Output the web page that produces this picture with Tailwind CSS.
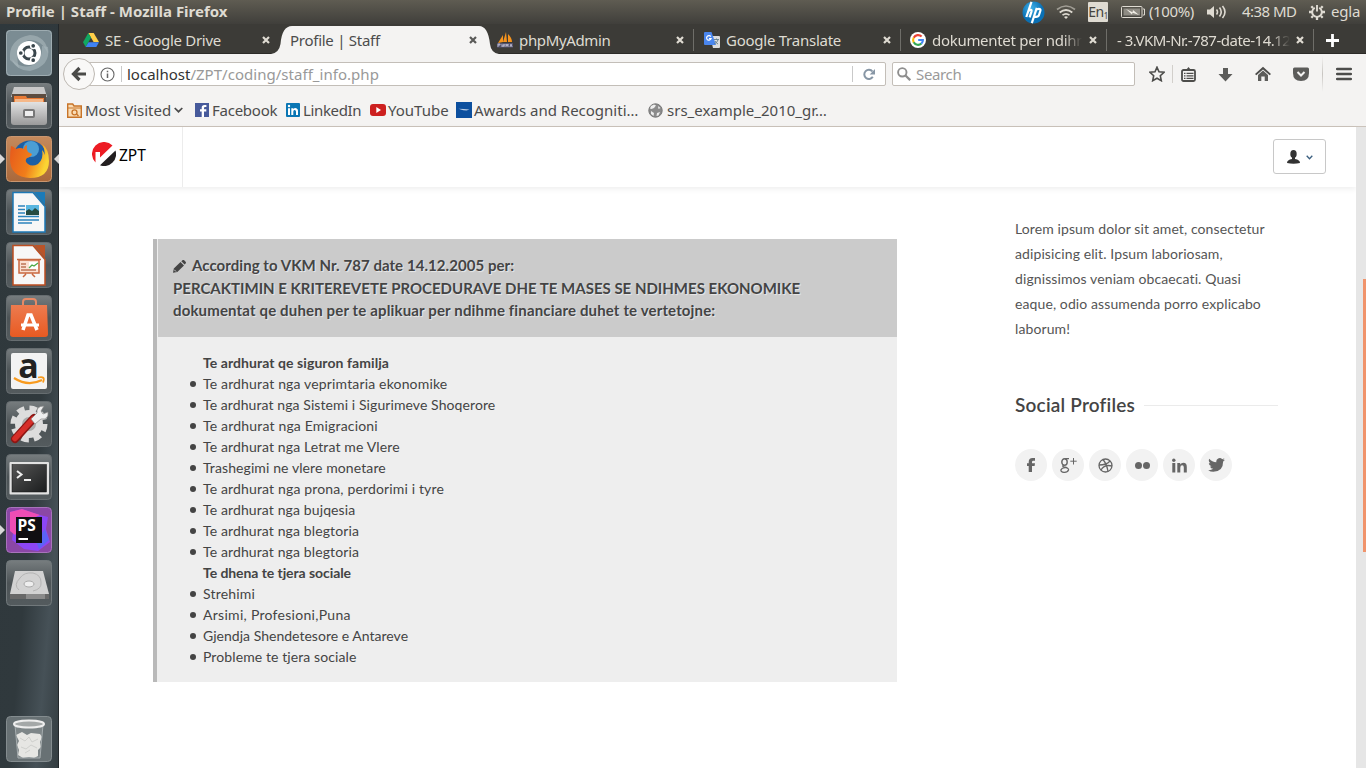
<!DOCTYPE html>
<html lang="sq">
<head>
<meta charset="utf-8">
<title>Profile | Staff</title>
<script src="https://cdn.jsdelivr.net/npm/@tailwindcss/browser@4"></script>
</head>
<body class="w-[1366px] h-[768px] overflow-hidden flex flex-col bg-white font-['Noto_Sans',sans-serif] text-[15px] leading-5 whitespace-nowrap">

<!-- System menu bar -->
<header class="h-6 shrink-0 flex items-center bg-linear-to-b from-[#5f5c52] to-[#403f3b] text-[#dfdbd2]">
  <div class="w-[1016px] pl-1.5 -mt-0.5 font-bold">Profile | Staff - Mozilla Firefox</div>
  <svg class="ml-1.5 size-[23px] shrink-0" viewBox="0 0 23 23"><defs><radialGradient id="hp" cx=".4" cy=".3"><stop offset="0" stop-color="#3fb0e8"/><stop offset="1" stop-color="#0a70b4"/></radialGradient></defs><circle cx="11.500" cy="11.500" r="11" fill="url(#hp)"/><path d="M9.500.800 4.300 16M5.800 10.500q4.300-3.500 3.700 0L7.600 16.300M14.800 6.800 9.800 22.200M14 8.500q5.300-1.600 4.300 1.500l-1.300 4q-.8 2.400-4.800 1.700" fill="none" stroke="#fff" stroke-width="2.200"/></svg>
  <svg class="ml-[11px] w-5 h-[14px] shrink-0" viewBox="0 0 20 14" fill="none" stroke="#dfdbd2" stroke-width="1.700"><path d="M1 4.500Q10-2.500 19 4.500" opacity=".55"/><path d="M3.700 7.500q6.300-5 12.600 0M6.500 10.200q3.500-2.700 7 0"/><path d="m8 12 2 2 2-2q-2-1.500-4 0" fill="#dfdbd2" stroke="none"/></svg>
  <div class="ml-3 w-5 h-5 shrink-0 bg-[#dfdbd2] text-[#45433e] text-[14px] tracking-[-0.5px] flex items-center justify-center rounded-[1px]">En<span class="text-[8px] pt-2">1</span></div>
  <svg class="ml-[13px] w-6 h-3 shrink-0" viewBox="0 0 24 12"><rect x=".5" y=".5" width="20.500" height="11" rx="1" fill="none" stroke="#dfdbd2"/><path d="M22 3h1.500v6H22" fill="none" stroke="#dfdbd2"/><path d="M2.500 2.500h16.500v7H2.500z" fill="#8f8c84"/><path d="m5 3 6.500 3.300L12 4l6 5-6.500-2.300L11 8.600z" fill="#f0ede5"/></svg>
  <span class="ml-1 w-[45px] -mt-0.5 tracking-[-0.4px]">(100%)</span>
  <svg class="ml-3 w-[21px] h-4 shrink-0" viewBox="0 0 21 16" fill="none" stroke="#dfdbd2" stroke-width="1.600"><path d="M1 5.500h3L8 2v12L4 10.500H1z" fill="#dfdbd2" stroke="none"/><path d="M10.500 5.500q2 2.500 0 5M13.500 3.500q3.500 4.500 0 9M16.500 2q5 6 0 12"/></svg>
  <span class="ml-[15px] w-[54px] -mt-0.5 tracking-[-0.55px]">4:38 MD</span>
  <svg class="ml-[13px] size-4 shrink-0" viewBox="0 0 16 16" fill="none" stroke="#dfdbd2"><path d="M5.800 3.800a4.800 4.800 0 1 0 4.400 0" stroke-width="1.900"/><path d="M8 1v6.500" stroke-width="1.900"/><path d="M0 8h3m10 0h3M8 13v3M2.300 2.300 4 4m9.700-1.700L12 4M2.300 13.700 4 12m9.700 1.700L12 12" stroke-width="2.300"/></svg>
  <span class="ml-1.5 -mt-0.5 tracking-[-0.2px]">egla</span>
</header>

<div class="flex flex-1 min-h-0">

<!-- Launcher -->
<nav class="w-[59px] shrink-0 pl-1.5 pt-1.5 pb-1.5 flex flex-col gap-[7px] bg-linear-[95deg,#2f383c_0%,#30393d_60%,#465157_82%,#343d41_100%] border-r border-[#22272a]">
  <svg class="size-[46px]" viewBox="0 0 46 46"><rect width="46" height="46" rx="4" fill="#7b8c93"/><path d="M4 30Q2 9 24 5q17 1 18 19Q36 9 22 10 7 16 13 38" fill="#aebbc0" opacity=".55"/><path d="M42 17q3 19-18 24Q9 40 6 29q9 11 21 6 10-5 9-19" fill="#a9b7bd" opacity=".6"/><rect x=".5" y=".5" width="45" height="45" rx="4" fill="none" stroke="#9eacb1"/><circle cx="23" cy="23" r="12" fill="#fff"/><circle cx="23" cy="23" r="6" fill="none" stroke="#3a464c" stroke-width="3"/><g stroke="#fff" stroke-width="1.500"><circle cx="14.800" cy="23" r="2.600" fill="#3a464c"/><circle cx="27.200" cy="15.800" r="2.600" fill="#3a464c"/><circle cx="27.200" cy="30.200" r="2.600" fill="#3a464c"/></g></svg>
  <svg class="size-[46px]" viewBox="0 0 46 46"><defs><linearGradient id="tile" x2="0" y2="1"><stop offset="0" stop-color="#777d7f"/><stop offset=".5" stop-color="#4c5356"/><stop offset="1" stop-color="#545b5e"/></linearGradient><linearGradient id="gr" x2="0" y2="1"><stop offset="0" stop-color="#e2e2e2"/><stop offset="1" stop-color="#9a9a9a"/></linearGradient></defs><rect x=".5" y=".5" width="45" height="45" rx="4" fill="url(#tile)" stroke="#777d7f"/><path d="M8 4h30l3 10H5z" fill="#c9c9c9"/><path d="M6 11h34v11H6z" fill="#5d4c40"/><path d="M8 13h12l1 2h17v6H8z" fill="#e87a35"/><path d="M9 16h28v3H9z" fill="#f5b889"/><path d="M5 19h36v20q0 3-3 3H8q-3 0-3-3z" fill="url(#gr)"/><rect x="18" y="27" width="10" height="7" rx="1" fill="#eee" stroke="#777" stroke-width="2"/></svg>
  <div class="relative size-[46px]">
    <svg class="size-[46px]" viewBox="0 0 46 46"><defs><linearGradient id="ff" x2="0" y2="1"><stop offset="0" stop-color="#c58a5c"/><stop offset="1" stop-color="#a9683b"/></linearGradient><linearGradient id="fox" x2="1" y2=".3"><stop offset="0" stop-color="#e5581c"/><stop offset=".6" stop-color="#f17e1a"/><stop offset="1" stop-color="#fbd433"/></linearGradient></defs><rect x=".5" y=".5" width="45" height="45" rx="4" fill="url(#ff)" stroke="#c9966f"/><circle cx="24" cy="21" r="16.500" fill="#1c5fa5"/><circle cx="25" cy="13" r="8" fill="#5fb9e8" opacity=".7"/><path d="M5 10q2 0 5 3 4-2 8 0 0-3 3-4-1 4 1 7l4 2q-1 3-5 4-3 3 1 6 4 3 10 0 6-5 4-14 2 2 3 5 0-6-3-11 7 5 7 17 0 17-19 17Q4 41 4 23 4 16 5 10z" fill="url(#fox)"/></svg>
    <span class="absolute -left-1.5 top-[18px] border-y-[5px] border-y-transparent border-l-[5px] border-l-[#d8d8d8]"></span>
    <span class="absolute left-12 top-[18px] border-y-[5px] border-y-transparent border-r-[5px] border-r-[#d8d8d8]"></span>
  </div>
  <svg class="size-[46px]" viewBox="0 0 46 46"><rect x=".5" y=".5" width="45" height="45" rx="4" fill="url(#tile)" stroke="#666d70"/><path d="M7 3.500h20l12 14V43H7z" fill="#f7f7f7" stroke="#1d78b5" stroke-width="1.500"/><path d="M28 3h11v13z" fill="#1b7bb8"/><path d="M12 17h7m-7 3.500h7M12 24h7m-7 3.500h21M12 31h21m-21 3h14" stroke="#2c84bd" stroke-width="1.700"/><path d="M20 16h13v10H20z" fill="#58b6e0"/><path d="m20 26 0-4 3-2 3 2 3-3 4 3v4z" fill="#254b42"/></svg>
  <svg class="size-[46px]" viewBox="0 0 46 46"><rect x=".5" y=".5" width="45" height="45" rx="4" fill="url(#tile)" stroke="#666d70"/><path d="M7 3.500h20l12 14V43H7z" fill="#f7f7f7" stroke="#bd4e21" stroke-width="1.500"/><path d="M28 3h11v13z" fill="#ba5429"/><path d="M13 18h20v13H13zM11 17.500h24M20 32l-3 3m9-3 3 3" fill="#fbe0d2" stroke="#c9673f" stroke-width="1.500"/><path d="M15 22h5m-5 3h5m-5 3h15" stroke="#bf7457" stroke-width="1.500"/><path d="M23 20h9v7h-9z" fill="#fff"/><path d="m23 26 3-3 2 1 4-3" fill="none" stroke="#4eaa47" stroke-width="1.300"/></svg>
  <svg class="size-[46px]" viewBox="0 0 46 46"><defs><linearGradient id="bag" x2="0" y2="1"><stop offset="0" stop-color="#ed7b4f"/><stop offset="1" stop-color="#e85a22"/></linearGradient></defs><rect x=".5" y=".5" width="45" height="45" rx="4" fill="url(#tile)" stroke="#666d70"/><path d="M17 13V7q0-3 3-3h7q3 0 3 3v6" fill="none" stroke="#e78a66" stroke-width="2"/><path d="M5 10h36l1 29q0 3-3 3H7q-3 0-3-3z" fill="url(#bag)"/><path d="M17 35 22 20h3l6 15" fill="none" stroke="#fff" stroke-width="3.500"/><path d="M15 30h18" stroke="#fff" stroke-width="3"/></svg>
  <svg class="size-[46px]" viewBox="0 0 46 46"><rect x=".5" y=".5" width="45" height="45" rx="4" fill="url(#tile)" stroke="#666d70"/><rect x="5" y="5" width="36" height="36" rx="2" fill="#f3f3f3"/><text x="22.500" y="29.500" text-anchor="middle" font-family="Open Sans" font-weight="700" font-size="34" fill="#222">a</text><path d="M8 30q14 9 28 2" fill="none" stroke="#f79a1e" stroke-width="2.200"/><path d="M32 29.500q8-2 5 5" fill="none" stroke="#f79a1e" stroke-width="1.800"/></svg>
  <svg class="size-[46px]" viewBox="0 0 46 46"><rect x=".5" y=".5" width="45" height="45" rx="4" fill="url(#tile)" stroke="#666d70"/><circle cx="23" cy="23" r="15.500" fill="none" stroke="#dcdcdc" stroke-width="6" stroke-dasharray="7.200 4.970"/><circle cx="23" cy="23" r="10.500" fill="#aaa" stroke="#ddd" stroke-width="7"/><path d="M9 38 28 17" stroke="#8d1714" stroke-width="8" stroke-linecap="round"/><path d="M9 37.500 27 18" stroke="#d62e29" stroke-width="5.500" stroke-linecap="round"/><path d="m25 18 6-6q-1-7 7-7l-3 5 2 3 5-2q1 8-7 7l-6 5z" fill="#eee" stroke="#888" stroke-width=".7"/></svg>
  <svg class="size-[46px]" viewBox="0 0 46 46"><defs><linearGradient id="term" x2="1" y2="1"><stop offset="0" stop-color="#555"/><stop offset="1" stop-color="#1b1d1e"/></linearGradient></defs><rect x=".5" y=".5" width="45" height="45" rx="4" fill="url(#tile)" stroke="#666d70"/><rect x="3.500" y="8" width="39.500" height="32.500" rx="1" fill="#e2e2e2"/><rect x="6" y="10.500" width="34.500" height="27.500" fill="url(#term)" stroke="#111" stroke-width=".5"/><path d="m11 17 4.500 3.500L11 24M18 26h7" fill="none" stroke="#eee" stroke-width="2"/></svg>
  <div class="relative size-[46px]">
    <svg class="size-[46px]" viewBox="0 0 46 46"><rect x=".5" y=".5" width="45" height="45" rx="4" fill="#8b47a5" stroke="#a873bb"/><path d="M4 5 16 2l14 5 12 3-2 12 4 13-12 9-14-2-12-9 2-14z" fill="#8c46f5"/><path d="M4 5 16 2l18 6-15 7-10 13-5-4z" fill="#ee4db5"/><path d="m30 34 9-12 4 11-10 9z" fill="#5b63f6"/><rect x="10" y="10" width="26" height="26" fill="#100f12"/><text x="11.500" y="23.500" font-family="Open Sans" font-weight="700" font-size="15.500" fill="#fff">PS</text><path d="M12.500 32H22" stroke="#fff" stroke-width="2"/></svg>
    <span class="absolute -left-1.5 top-[18px] border-y-[5px] border-y-transparent border-l-[5px] border-l-[#d8d8d8]"></span>
  </div>
  <svg class="size-[46px]" viewBox="0 0 46 46"><rect x=".5" y=".5" width="45" height="45" rx="4" fill="url(#tile)" stroke="#71787b"/><path d="M9 11h28l6 23H4z" fill="#d2d2d2"/><path d="M4 34h39v5H4z" fill="#686868"/><path d="M13 30Q7 25 14 18q4-6 13-5 8 2 8 9 1 7-8 9" fill="none" stroke="#b4b4b4"/><ellipse cx="23" cy="24" rx="5" ry="3" fill="#eee" stroke="#aaa"/><path d="M20 34h19v5H20z" fill="#8b8b8b"/></svg>
  <svg class="mt-auto size-[46px]" viewBox="0 0 46 46"><rect x=".5" y=".5" width="45" height="45" rx="4" fill="#687174" stroke="#848c8f"/><path d="m9 9 3 33h22l3-33z" fill="#7e8688"/><path d="m10 19 6-3 5 3 4-2 9 1 2 3-2 5 1 5-3 3v6l-4 2-5-1-6 1-5-3 1-5-2-5 2-4z" fill="#e6e6e3"/><path d="m14 22 5 3 4-4 3 5 6-3m-17 8 5 2 5-4 6 3m-12 5 5-3" fill="none" stroke="#cfd0cd"/><path d="m9 9 3 33h22l3-33" fill="none" stroke="#a5acae"/><ellipse cx="23" cy="8" rx="15" ry="3.500" fill="#a4a8a8" stroke="#eee" stroke-width="2"/></svg>
</nav>

<!-- Browser window -->
<main class="flex-1 min-w-0 flex flex-col text-[#4c4c4c]">

  <!-- Tabs -->
  <div class="h-[30px] shrink-0 flex bg-[#3c3b37] pl-[14px] text-[#dfdbd2] border-b border-[#2c2b28]">
    <div class="w-[207px] pl-2.5 pr-[10px] flex items-center gap-1.5 pt-0.5">
      <svg class="size-4 shrink-0" viewBox="0 0 16 16"><path d="M5.300 1h5.400L16 10h-5.400z" fill="#ffcf48"/><path d="M5.300 1 8 5.600 2.700 15 0 10.300z" fill="#11a861"/><path d="M5.500 10.300H16L13.300 15H2.700z" fill="#3f82f3"/></svg>
      <span class="flex-1 tracking-[-0.29px]">SE - Google Drive</span>
      <svg class="size-2" viewBox="0 0 8 8"><path d="m1 1 6 6m0-6L1 7" stroke="#dfdbd2" stroke-width="2.200"/></svg>
    </div>
    <div class="relative w-[207px] pl-2.5 pr-[10px] flex items-center pt-0.5 text-[#4c4c4c]">
      <svg class="absolute -left-[9px] top-[2px] w-[228px] h-7" viewBox="0 0 228 28"><path d="M0 28q8-1 9.500-10Q11 0 21 0h187q9 0 11 18 1 9 9 10z" fill="#f4f3f2"/></svg>
      <span class="relative flex-1 tracking-[-0.27px]">Profile | Staff</span>
      <svg class="relative size-2" viewBox="0 0 8 8"><path d="m1 1 6 6m0-6L1 7" stroke="#5a5a58" stroke-width="2.200"/></svg>
    </div>
    <div class="relative w-[207px] pl-2.5 pr-[10px] flex items-center gap-1.5 pt-0.5">
      <svg class="size-4 shrink-0" viewBox="0 0 16 16"><path d="M1 11 6 3v7zM6 10 9 0l1 10zM11 10V2q4 4 4 8z" fill="#f7941d"/><path d="M0 11h16v4.500H0z" fill="#55546e"/><path d="M1 15v-3h2v1H1m4 2v-3m0 2h2v-2m0 3v-3m2 3v-3l1 2 1-2v3m2 0 1-3 1 3" stroke="#c9c9dc" stroke-width=".8" fill="none"/></svg>
      <span class="flex-1 tracking-[-0.35px]">phpMyAdmin</span>
      <svg class="size-2" viewBox="0 0 8 8"><path d="m1 1 6 6m0-6L1 7" stroke="#dfdbd2" stroke-width="2.200"/></svg>
      <span class="absolute right-0 top-[5px] h-[22px] w-px bg-[#6f6e69]"></span>
    </div>
    <div class="relative w-[207px] pl-2.5 pr-[10px] flex items-center gap-1.5 pt-0.5">
      <svg class="size-4 shrink-0" viewBox="0 0 16 16"><path d="M6 4h9q1 0 1 1v10q0 1-1 1H9z" fill="#dcdcdc"/><path d="M1 0h6.500L12 13H1q-1 0-1-1V1q0-1 1-1z" fill="#4a86ee"/><path d="M6.800 4.600a2.300 2.300 0 1 0 .3 2H5" fill="none" stroke="#fff" stroke-width="1.200"/><path d="M10 7.500h5M12.500 6.500v1M14 8q-1 3-4 4m1-3q1 2 3 3" fill="none" stroke="#607d8b" stroke-width=".9"/></svg>
      <span class="flex-1 tracking-[-0.25px]">Google Translate</span>
      <svg class="size-2" viewBox="0 0 8 8"><path d="m1 1 6 6m0-6L1 7" stroke="#dfdbd2" stroke-width="2.200"/></svg>
      <span class="absolute right-0 top-[5px] h-[22px] w-px bg-[#6f6e69]"></span>
    </div>
    <div class="relative w-[206px] pl-[9px] pr-[10px] flex items-center gap-1.5 pt-0.5">
      <svg class="size-4 shrink-0" viewBox="0 0 16 16"><circle cx="8" cy="8" r="8" fill="#fff"/><g fill="none" stroke-width="2.100"><path d="M11.600 4.600A4.900 4.900 0 0 0 3.700 5.800" stroke="#ea4335"/><path d="M3.700 5.700a4.900 4.900 0 0 0 0 4.700" stroke="#fbbc05"/><path d="M3.700 10.300a4.900 4.900 0 0 0 7.700 1.200" stroke="#34a853"/><path d="M11.300 11.600A4.500 4.500 0 0 0 12.900 8H8.200" stroke="#4285f4"/></g></svg>
      <span class="w-[150px] overflow-hidden tracking-[-0.3px] mask-r-from-88% mask-r-to-100%">dokumentet per ndihm</span>
      <svg class="ml-auto size-2 shrink-0" viewBox="0 0 8 8"><path d="m1 1 6 6m0-6L1 7" stroke="#dfdbd2" stroke-width="2.200"/></svg>
      <span class="absolute right-0 top-[5px] h-[22px] w-px bg-[#6f6e69]"></span>
    </div>
    <div class="relative w-[207px] pl-2.5 pr-[10px] flex items-center gap-1.5 pt-0.5">
      <span class="w-[173px] overflow-hidden tracking-[-0.5px] mask-r-from-89% mask-r-to-100%">- 3.VKM-Nr.-787-date-14.12</span>
      <svg class="ml-auto size-2 shrink-0" viewBox="0 0 8 8"><path d="m1 1 6 6m0-6L1 7" stroke="#dfdbd2" stroke-width="2.200"/></svg>
      <span class="absolute right-0 top-[5px] h-[22px] w-px bg-[#6f6e69]"></span>
    </div>
    <svg class="ml-3 mt-[10px] size-[13px]" viewBox="0 0 13 13"><path d="M6.500 0v13M0 6.500h13" stroke="#fff" stroke-width="2.800"/></svg>
  </div>

  <!-- Navigation toolbar -->
  <div class="h-[41px] pb-px shrink-0 flex items-center bg-[#f4f3f2]">
    <div class="relative z-10 ml-1 size-8 shrink-0 rounded-full bg-[#f9f8f7] border border-[#bdb8b2] flex items-center justify-center">
      <svg class="size-4" viewBox="0 0 16 16"><path d="M15 8H4M8.500 2 2.500 8l6 6" fill="none" stroke="#4a4a48" stroke-width="3.200"/></svg>
    </div>
    <div class="-ml-4 w-[807px] h-6 shrink-0 bg-white border border-[#c3beb8] rounded-[2px] flex items-center">
      <svg class="ml-5 size-[15px]" viewBox="0 0 15 15"><circle cx="7.500" cy="7.500" r="6.500" fill="none" stroke="#666" stroke-width="1.100"/><path d="M7.500 6.500V11M7.500 3.700v1.600" stroke="#666" stroke-width="1.500"/></svg>
      <span class="ml-[6px] h-4 w-px bg-[#c9c9c9]"></span>
      <span class="ml-[5px] -mt-px text-[#999]"><span class="text-[#333]">localhost</span><span class="tracking-[0.03px]">/ZPT/coding/staff_info.php</span></span>
      <span class="ml-auto h-4 w-px bg-[#c9c9c9]"></span>
      <svg class="ml-2.5 mr-[9px] size-[13px]" viewBox="0 0 13 13"><path d="M9.800 8.800A4.600 4.600 0 1 1 9.500 3.500" fill="none" stroke="#8796a5" stroke-width="2"/><path d="M12 1v5.500H6.700z" fill="#8796a5"/></svg>
    </div>
    <div class="ml-1.5 w-[243px] h-6 shrink-0 bg-white border border-[#c3beb8] rounded-[2px] flex items-center">
      <svg class="ml-1 size-[14px]" viewBox="0 0 14 14" fill="none" stroke="#8e8e8e"><circle cx="5.300" cy="5.300" r="4.200" stroke-width="1.900"/><path d="m8.500 8.500 4.700 4.700" stroke-width="2.300"/></svg>
      <span class="ml-[5px] -mt-px text-[#9a9a9a] tracking-[-0.35px]">Search</span>
    </div>
    <svg class="ml-[14px] size-4" viewBox="0 0 16 16"><path d="m8 1.200 2 4.600 5 .5-3.700 3.400 1 5L8 12.200l-4.300 2.500 1-5L1 6.300l5-.5z" fill="none" stroke="#4d4d4b" stroke-width="1.600"/></svg>
    <span class="ml-[7px] h-[18px] w-px bg-[#d2cfcb]"></span>
    <svg class="ml-2 size-[15px]" viewBox="0 0 15 15"><rect x="1" y="3" width="13" height="11" rx="1.500" fill="none" stroke="#4d4d4b" stroke-width="1.800"/><path d="M5 3 7.500 0 10 3z" fill="#4d4d4b"/><path d="M3 6.300h1.500m1 0h7M3 8.800h1.500m1 0h7M3 11.300h1.500m1 0h7" stroke="#4d4d4b" stroke-width="1.300"/></svg>
    <svg class="ml-[22px] size-[15px]" viewBox="0 0 15 15"><path d="M5 1h5v6h4.500l-7 7.500L.5 7H5z" fill="#5c5c5a"/></svg>
    <svg class="ml-[22px] size-4" viewBox="0 0 16 16"><path d="M0 8 8 .8 16 8l-1.300 1.200L8 3.400 1.300 9.200z" fill="#4d4d4b"/><path d="m3 9 5-4.500L13 9v6H9.700v-4.500H6.300V15H3z" fill="#5c5c5a"/></svg>
    <svg class="ml-[22px] size-4" viewBox="0 0 16 16"><path d="M1.500 1.500h13q1.500 0 1.500 1.500v4q0 8-8 8T0 7V3q0-1.500 1.500-1.500z" fill="#5c5c5a"/><path d="M4.500 6 8 9.500 11.500 6" fill="none" stroke="#f4f3f2" stroke-width="2"/></svg>
    <span class="ml-[13px] h-9 w-px bg-linear-to-b from-transparent via-[#c8c5c1] to-transparent"></span>
    <svg class="ml-[13px] w-4 h-3.5" viewBox="0 0 16 14"><path d="M1.200 2h13.600M1.200 7h13.600M1.200 12h13.600" stroke="#4d4d4b" stroke-width="2.500" stroke-linecap="round"/></svg>
  </div>

  <!-- Bookmarks -->
  <div class="h-8 pb-px shrink-0 flex items-center bg-[#f4f3f2] border-b border-[#cbc3bb] pl-2">
    <svg class="size-[15px]" viewBox="0 0 15 15"><path d="M.7 14.300V1h5l1.300 2h7.300v11.300z" fill="#f9dcb5" stroke="#c87429" stroke-width="1.400"/><path d="M1 5h13" stroke="#c87429"/><circle cx="7.500" cy="9.300" r="2.500" fill="none" stroke="#c87429" stroke-width="1.300"/><path d="m9.500 11 2 2" stroke="#c87429" stroke-width="1.400"/></svg>
    <span class="ml-[3px] w-[86px]">Most Visited</span>
    <svg class="ml-[3px] w-[9px] h-1.5" viewBox="0 0 9 6"><path d="m.7 1 3.800 3.700L8.300 1" fill="none" stroke="#4c4c4c" stroke-width="1.700"/></svg>
    <svg class="ml-3 size-[14px]" viewBox="0 0 14 14"><path d="M0 0h14v14H0z" fill="#475a9b"/><path d="M9 14V8.500h2.300V6.300H9V5q0-1 1-1h1.400V1.900H9.500Q6.700 1.900 6.700 4.700v1.600H5v2.200h1.700V14z" fill="#fff"/></svg>
    <span class="ml-[3px] w-[65px] tracking-[-0.25px]">Facebook</span>
    <svg class="ml-[9px] size-[14px]" viewBox="0 0 14 14"><rect width="14" height="14" rx="1" fill="#0a76b4"/><path d="M2 5.300h2V12H2zM5.300 5.300h2V6q2-1.800 4 0 .7.700.7 2v4h-2V8.500Q9.700 6.700 8.500 7q-1.200.3-1.200 1.800V12h-2z" fill="#fff"/><circle cx="3" cy="3" r="1.200" fill="#fff"/></svg>
    <span class="ml-[3px] w-[58px] tracking-[-0.35px]">LinkedIn</span>
    <svg class="ml-[9px] w-4 h-3" viewBox="0 0 16 12"><rect width="16" height="12" rx="3" fill="#cd201f"/><path d="M6.300 3v6L11 6z" fill="#fff"/></svg>
    <span class="ml-[2px] w-[60px]">YouTube</span>
    <svg class="ml-2 size-4" viewBox="0 0 16 16"><path d="M0 0h16v16H0z" fill="#0c4f9e"/><path d="M2.500 6.700q5 0 11 .8l-3 1q-4 0-5-.8z" fill="#b9cbe2"/></svg>
    <span class="ml-0.5 w-[163px]">Awards and Recogniti…</span>
    <svg class="ml-[11px] size-[15px]" viewBox="0 0 15 15"><circle cx="7.500" cy="7.500" r="6.700" fill="#8b8b8b" stroke="#777"/><path d="m3 3 3-1.500 2 1L6 5 3.500 6 2 5.500zM3 8l3 2-.5 3L3 11zm6 2 3-1-1.500 3.500-2 .5zM10 3l2.500 2-2 1z" fill="#eee"/></svg>
    <span class="ml-1">srs_example_2010_gr…</span>
  </div>

  <!-- Page -->
  <div class="flex-1 min-h-0 flex bg-white font-['Lato',sans-serif] text-sm">
    <div class="w-[1297px] flex flex-col">
      <div class="h-[60px] shrink-0 flex items-center shadow-[0_2px_6px_rgba(0,0,0,0.07)]">
        <div class="w-[124px] h-full border-r border-[#ececec] flex items-center pl-[33px] pb-1.5">
          <svg class="size-6" viewBox="0 0 24 24"><path d="M3.500 20.500A12 12 0 1 1 20.500 3.500L8 15.500V10H3.500z" fill="#ed1c24"/><path d="M23.500 8.500A12 12 0 0 1 8 23.300z" fill="#231f20"/></svg>
          <span class="ml-[3px] pt-0.5 font-['Noto_Sans',sans-serif] text-[15.500px] text-black">ZPT</span>
        </div>
        <div class="ml-auto mr-[30px] mb-px w-[53px] h-[35px] border border-[#c8c8c8] rounded-[3px] flex items-center pl-[13px]">
          <svg class="w-[13px] h-[14px]" viewBox="0 0 13 14"><ellipse cx="6.500" cy="4" rx="3.200" ry="4" fill="#333"/><path d="M5 7h3v2q5 .8 5 4-6.500 1.500-13 0Q0 9.800 5 9z" fill="#333"/></svg>
          <svg class="ml-[6px] mt-0.5 w-[7px] h-[5px]" viewBox="0 0 7 5"><path d="m.7.700 2.800 3L6.300.7" fill="none" stroke="#3c6080" stroke-width="1.300"/></svg>
        </div>
      </div>

      <div class="flex">
        <section class="ml-[94px] mt-[52px] w-[744px] h-[443px] border-l-4 border-[#b9b9b9] bg-[#eee] text-[#444]">
          <h2 class="ml-px h-[98px] bg-[#cbcbcb] pl-[15px] pt-[15px] text-[15px] leading-[22.600px] font-bold [text-shadow:1px_1px_1px_rgba(255,255,255,0.6)]">
            <svg class="inline-block size-[13px] mr-1.5 -mt-0.5" viewBox="0 0 13 13"><path d="M0 12.700.8 8.500 7.500 2l3.500 3.500-6.700 6.500zM8.300 1.300 9.400.300q.9-.7 1.800 0l1.400 1.400q.8.900 0 1.800l-1 1z" fill="#444"/><path d="m1.200 9.700 1.900 1.900" stroke="#cbcbcb"/></svg><span class="tracking-[0.06px]">According to VKM Nr. 787 date 14.12.2005 per:</span><br>
            PERCAKTIMIN E KRITEREVETE PROCEDURAVE DHE TE MASES SE NDIHMES EKONOMIKE<br>
            <span class="tracking-[0.15px]">dokumentat qe duhen per te aplikuar per ndihme financiare duhet te vertetojne:</span>
          </h2>
          <ul class="pt-[15px] pl-[45px] leading-[21px] [&>li:not(.font-bold)]:before:content-[''] [&>li:not(.font-bold)]:before:inline-block [&>li:not(.font-bold)]:before:size-1.5 [&>li:not(.font-bold)]:before:rounded-full [&>li:not(.font-bold)]:before:bg-[#444] [&>li:not(.font-bold)]:before:-ml-[13px] [&>li:not(.font-bold)]:before:mr-[7px] [&>li:not(.font-bold)]:before:mb-0.5">
            <li class="font-bold pl-px tracking-[0.07px]">Te ardhurat qe siguron familja</li>
            <li class="pl-px tracking-[0.16px]">Te ardhurat nga veprimtaria ekonomike</li>
            <li class="pl-px tracking-[0.09px]">Te ardhurat nga Sistemi i Sigurimeve Shoqerore</li>
            <li class="pl-px tracking-[0.18px]">Te ardhurat nga Emigracioni</li>
            <li class="pl-px tracking-[0.13px]">Te ardhurat nga Letrat me Vlere</li>
            <li class="pl-px tracking-[0.1px]">Trashegimi ne vlere monetare</li>
            <li class="pl-px tracking-[0.15px]">Te ardhurat nga prona, perdorimi i tyre</li>
            <li class="pl-px tracking-[0.12px]">Te ardhurat nga bujqesia</li>
            <li class="pl-px tracking-[0.12px]">Te ardhurat nga blegtoria</li>
            <li class="pl-px tracking-[0.12px]">Te ardhurat nga blegtoria</li>
            <li class="font-bold pl-px tracking-[-0.07px]">Te dhena te tjera sociale</li>
            <li class="pl-px tracking-[0.2px]">Strehimi</li>
            <li class="pl-px tracking-[0.29px]">Arsimi, Profesioni,Puna</li>
            <li class="pl-px tracking-[0.02px]">Gjendja Shendetesore e Antareve</li>
            <li class="pl-px tracking-[0.1px]">Probleme te tjera sociale</li>
          </ul>
        </section>

        <aside class="ml-[118px] mt-[29px] w-[263px] text-[#555]">
          <p class="leading-[25px] tracking-[0.1px]">Lorem ipsum dolor sit amet, consectetur<br>adipisicing elit. Ipsum laboriosam,<br>dignissimos veniam obcaecati. Quasi<br>eaque, odio assumenda porro explicabo<br>laborum!</p>
          <h3 class="mt-[52px] flex items-center text-[19px] leading-6 font-semibold tracking-[0.2px] text-[#444]"><span class="w-[129px]">Social Profiles</span><span class="h-px flex-1 bg-[#ebebeb]"></span></h3>
          <div class="mt-8 flex gap-[5px] text-[#666]">
            <span class="size-8 rounded-full bg-[#f2f2f2] flex items-center justify-center"><svg class="w-2 h-[14px]" viewBox="0 0 8 14"><path d="M1.700 14V8H0V5.300h1.700V4Q1.700 0 5.500 0H8v2.700H6.300q-1.300 0-1.300 1.300v1.300h3L7.600 8H5v6z" fill="#666"/></svg></span>
            <span class="size-8 rounded-full bg-[#f2f2f2] flex items-center justify-center"><svg class="w-[17px] h-[15px]" viewBox="0 0 17 15" fill="none" stroke="#666"><ellipse cx="4.500" cy="4" rx="2.700" ry="3.200" stroke-width="1.400"/><path d="M5 .7h4M3.500 7q-1.500 1.500.5 2 5 1 4.500 3Q7.500 14.500 4 14.300.5 14 1 11.700q.8-1.900 4-2" stroke-width="1.300"/><path d="M13.500 0v6.500M10.300 3.200h6.400"/></svg></span>
            <span class="size-8 rounded-full bg-[#f2f2f2] flex items-center justify-center"><svg class="size-[15px]" viewBox="0 0 15 15" fill="none" stroke="#666" stroke-width="1.300"><circle cx="7.500" cy="7.500" r="6.500"/><path d="M5 1.500q4 5 5 12M1 7q8 0 11-4M3 12q3.500-6 11-4"/></svg></span>
            <span class="size-8 rounded-full bg-[#f2f2f2] flex items-center justify-center"><svg class="w-[15px] h-[7px]" viewBox="0 0 15 7" fill="#666"><circle cx="3.500" cy="3.500" r="3.500"/><circle cx="11.500" cy="3.500" r="3.500"/></svg></span>
            <span class="size-8 rounded-full bg-[#f2f2f2] flex items-center justify-center"><svg class="size-[15px]" viewBox="0 0 15 14" fill="#666"><path d="M.3 4.600h3V14h-3zM5.300 4.600h2.900v1.300Q9.300 4.300 11.400 4.300q3.400 0 3.400 4.200V14h-3V9q0-2.200-1.600-2.200-1.900 0-1.900 2.400V14h-3z"/><circle cx="1.800" cy="1.700" r="1.700"/></svg></span>
            <span class="size-8 rounded-full bg-[#f2f2f2] flex items-center justify-center"><svg class="w-[17px] h-[14px]" viewBox="0 0 24 20"><path d="M24 2.400q-1.300.6-2.800.8Q22.700 2.300 23.300.5q-1.400.8-3.100 1.200A4.900 4.900 0 0 0 11.800 6Q5.500 5.700 1.700 1q-2 3.700 1.500 6.600-1.200 0-2.200-.6 0 3.700 3.900 4.900-1 .3-2.200.1 1 3.200 4.600 3.400-3 2.400-7.300 2 3.400 2.200 7.500 2.200 14 0 14-14.500Q23 4 24 2.400z" fill="#666"/></svg></span>
          </div>
        </aside>
      </div>
    </div>
    <!-- Scrollbar -->
    <div class="w-2.5 bg-[#e6e6e6] flex justify-end pt-[152px]"><span class="w-[3px] h-[273px] bg-[#f0936b]"></span></div>
  </div>
</main>
</div>
</body>
</html>
